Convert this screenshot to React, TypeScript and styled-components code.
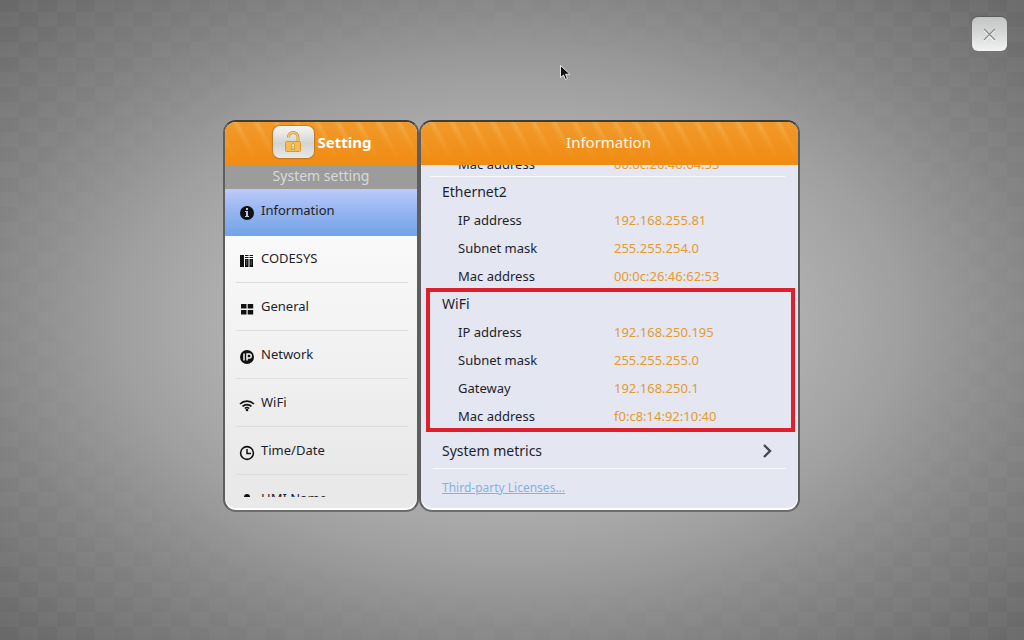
import React from "react";
import styled, { createGlobalStyle, css } from "styled-components";

const GlobalStyle = createGlobalStyle`
  * { box-sizing: border-box; }
  body {
    margin: 0;
    font-family: "Noto Sans", "Open Sans", sans-serif;
    font-size: 13px;
    color: #1d1f2b;
    background: #6f6e6f;
  }
  button { font: inherit; color: inherit; border: 0; padding: 0; background: none; }
  h1, h2, h3, dl, dt, dd, ul { margin: 0; padding: 0; font-weight: 400; }
  ul { list-style: none; }
`;

const Screen = styled.main`
  position: relative;
  min-height: 100vh;
  padding: 120px 16px 40px 15px;
  display: flex;
  justify-content: center;
  align-items: flex-start;
  background: radial-gradient(ellipse 70% 69% at 50% 50%, #c4c4c4 0%, #b4b4b4 34%, #a0a0a0 54%, #868686 75%, #6e6d6e 100%);
  &::before {
    content: "";
    position: absolute;
    inset: 0;
    background: repeating-conic-gradient(rgba(0, 0, 0, 0.04) 0 25%, transparent 0 50%) 0 12px / 38px 30px;
    mask-image: radial-gradient(ellipse 66% 70% at 50% 50%, transparent 60%, #000 110%);
  }
`;

const Panels = styled.div`
  position: relative;
  width: 100%;
  max-width: 577px;
  display: grid;
  grid-template-columns: 196fr 381fr;
`;

const Panel = styled.section<{ $tone: "list" | "detail" }>`
  display: flex;
  flex-direction: column;
  overflow: hidden;
  border: 2px solid;
  border-color: #3f3c38 #5e5e5e #6c6c6c;
  border-radius: 13px;
  background: ${(p) => (p.$tone === "list" ? "linear-gradient(#fcfcfc 20%, #e9e9e9 90%)" : "#e4e6f2")};
  box-shadow: inset 0 -2px 0 #fff;
`;

const Header = styled.header`
  flex: none;
  height: 43px;
  padding: 0 2px 4px 0;
  display: flex;
  align-items: center;
  justify-content: center;
  gap: 4px;
  color: #fff6e4;
  background:
    linear-gradient(rgba(240, 141, 20, 0) 10%, #f08d14 88%),
    repeating-linear-gradient(62deg, #f0982a 0 7px, #f3a842 12px, #f0982a 15px 18px);
`;

const Title = styled.h1<{ $bold?: boolean }>`
  font-size: 15px;
  line-height: 20px;
  ${(p) => p.$bold && css`font-weight: 700; color: #fff;`}
`;

const LockButton = styled.button`
  width: 41px;
  height: 32px;
  margin-left: 4px;
  display: grid;
  place-items: center;
  border-radius: 7px;
  background: linear-gradient(#f6f6f4, #d3d4d2 55%, #e9eae8);
  box-shadow: 0 0 1px 1px rgba(150, 100, 40, 0.55);
`;

const Subheader = styled.h2`
  flex: none;
  height: 24px;
  font-size: 14px;
  line-height: 22px;
  text-align: center;
  color: #d9d9d9;
  background: #9c9c9c;
`;

const Menu = styled.ul`
  height: 308px;
  margin-bottom: 12px;
  overflow: hidden;
`;

const MenuButton = styled.button<{ $active?: boolean }>`
  width: 100%;
  height: 48px;
  padding: 0 0 4px 14px;
  display: flex;
  align-items: center;
  gap: 6px;
  text-align: left;
  background: linear-gradient(#dedede, #dedede) 11px 46px / calc(100% - 20px) 1px no-repeat;
  svg { margin-top: 5px; flex: none; }
  ${(p) => p.$active && css`
    height: 47px;
    padding-bottom: 5px;
    background: linear-gradient(#bccbfa, #94b3f0 50%, #72a4e6);
  `}
`;

const Details = styled.div`
  flex: 1;
  overflow: hidden;
`;

const Group = styled.section<{ $marked?: boolean; $scrolled?: boolean }>`
  margin: 0 5px 0 7px;
  padding: 0 14px;
  ${(p) => p.$marked && css`outline: 4px solid #dd202c; outline-offset: -2px;`}
  ${(p) => p.$scrolled && css`
    margin-top: -15px;
    background: linear-gradient(#f8f9fd, #f8f9fd) 2px 26px / calc(100% - 10px) 1px no-repeat;
  `}
`;

const GroupTitle = styled.h3`
  font-size: 14px;
  line-height: 28px;
`;

const Row = styled.div`
  display: grid;
  grid-template-columns: 156fr 165fr;
  padding-left: 16px;
  line-height: 28px;
  dd { color: #e59b2e; }
`;

const MetricsButton = styled.button`
  width: calc(100% - 24px);
  height: 39px;
  margin: 0 12px;
  padding: 2px 13px 0 9px;
  display: flex;
  align-items: center;
  justify-content: space-between;
  font-size: 14px;
  border-bottom: 1px solid #f8f9fd;
  svg { margin-top: 2px; }
`;

const Footer = styled.p`
  margin: 0;
  padding: 9px 21px 12px;
  font-size: 12px;
  line-height: 20px;
  a { color: #82b4de; }
`;

const CloseButton = styled.button`
  position: absolute;
  top: 17px;
  right: 17px;
  width: 35px;
  height: 34px;
  display: grid;
  place-items: center;
  border-radius: 6px;
  background: linear-gradient(#c2c5c4, #d9dbda 55%, #f2f3f2);
  box-shadow: 0 -1px 1px 0 rgba(60, 60, 60, 0.4);
`;

const Pointer = styled.svg`
  position: absolute;
  left: 559px;
  top: 64px;
`;

const icons: Record<string, React.ReactNode> = {
  info: (
    <>
      <circle cx="8" cy="8" r="7" />
      <path d="M7 3h2v2H7zM6 6h3v5h1v1H6v-1h1V7H6z" fill="#b9c9ee" />
    </>
  ),
  codesys: (
    <>
      <path d="M1 2h4v12H1zM6 6h3.500v8H6zM10.500 6H14v8h-3.500zM6 2h3.500v1H6zM6 4h3.500v1H6zM10.500 2H14v1h-3.500zM10.500 4H14v1h-3.500z" />
      <path d="M7.700 7v5M12.200 7v5" stroke="#777" fill="none" strokeWidth=".7" />
    </>
  ),
  general: <path d="M2 3h5.500v4.500H2zM8.700 3h5.500v4.500H8.700zM2 9h5.500v4.500H2zM8.700 9h5.500v4.500H8.700z" />,
  network: (
    <>
      <circle cx="8" cy="8" r="7" />
      <path d="M5 4.500v7M8 11.500V5h2.200a1.900 1.900 0 0 1 0 4H8" fill="none" stroke="#f3f3f3" strokeWidth="1.500" />
    </>
  ),
  wifi: (
    <>
      <path d="M1 7a10 10 0 0 1 14 0M3.500 9.400a6.600 6.600 0 0 1 9 0M5.800 11.500a3.300 3.300 0 0 1 4.400 0" fill="none" stroke="#111" strokeWidth="1.600" />
      <circle cx="8" cy="13" r="1.300" />
    </>
  ),
  clock: (
    <>
      <circle cx="8" cy="8" r="6.400" fill="none" stroke="#111" strokeWidth="1.600" />
      <path d="M8 4v4.500h4" fill="none" stroke="#111" strokeWidth="1.500" />
    </>
  ),
  name: <circle cx="8" cy="4" r="3" />,
};

const menu = [
  ["info", "Information"],
  ["codesys", "CODESYS"],
  ["general", "General"],
  ["network", "Network"],
  ["wifi", "WiFi"],
  ["clock", "Time/Date"],
  ["name", "HMI Name"],
];

function Entries({ rows }: { rows: string[][] }) {
  return (
    <dl>
      {rows.map(([label, value]) => (
        <Row key={label}>
          <dt>{label}</dt>
          <dd>{value}</dd>
        </Row>
      ))}
    </dl>
  );
}

export default function App() {
  return (
    <Screen>
      <GlobalStyle />
      <Panels>
        <Panel $tone="list">
          <Header>
            <LockButton aria-label="Unlock">
              <svg width="18" height="24" viewBox="0 0 18 24">
                <path d="M4.500 7.500C4.500 4 6.500 2.500 9 2.500s5 2 5 5V12" fill="none" stroke="#c98f22" strokeWidth="2.800" />
                <path d="M4.500 7.500C4.500 4 6.500 2.500 9 2.500s5 2 5 5V12" fill="none" stroke="#f6d57e" strokeWidth="1.300" />
                <rect x="1.500" y="11.500" width="15" height="10" rx="1" fill="#f4bd4c" stroke="#d99a2b" />
                <path d="M9 13.500a1.600 1.600 0 0 1 1 2.800l.5 3h-3l.5-3a1.600 1.600 0 0 1 1-2.800z" fill="#e6e0cf" stroke="#b88632" strokeWidth=".7" />
              </svg>
            </LockButton>
            <Title $bold>Setting</Title>
          </Header>
          <Subheader>System setting</Subheader>
          <Menu>
            {menu.map(([icon, label], i) => (
              <li key={label}>
                <MenuButton $active={i === 0}>
                  <svg width="16" height="16" viewBox="0 0 16 16" fill="#111">{icons[icon]}</svg>
                  {label}
                </MenuButton>
              </li>
            ))}
          </Menu>
        </Panel>
        <Panel $tone="detail">
          <Header>
            <Title>Information</Title>
          </Header>
          <Details>
            <Group $scrolled>
              <Entries rows={[["Mac address", "00:0c:26:46:64:53"]]} />
            </Group>
            <Group>
              <GroupTitle>Ethernet2</GroupTitle>
              <Entries rows={[["IP address", "192.168.255.81"], ["Subnet mask", "255.255.254.0"], ["Mac address", "00:0c:26:46:62:53"]]} />
            </Group>
            <Group $marked>
              <GroupTitle>WiFi</GroupTitle>
              <Entries rows={[["IP address", "192.168.250.195"], ["Subnet mask", "255.255.255.0"], ["Gateway", "192.168.250.1"], ["Mac address", "f0:c8:14:92:10:40"]]} />
            </Group>
            <MetricsButton>
              System metrics
              <svg width="11" height="16" viewBox="0 0 11 16" fill="none" stroke="#454650" strokeWidth="2.400">
                <path d="M2 2l6 6-6 6" />
              </svg>
            </MetricsButton>
            <Footer><a href="#licenses">Third-party Licenses...</a></Footer>
          </Details>
        </Panel>
      </Panels>
      <CloseButton aria-label="Close">
        <svg width="15" height="15" viewBox="0 0 15 15" fill="none">
          <path d="M2 3l11 11M13 3L2 14" stroke="#fff" strokeWidth="1.500" />
          <path d="M2 2l11 11M13 2L2 13" stroke="#858786" strokeWidth="1.200" />
        </svg>
      </CloseButton>
      <Pointer width="12" height="17" viewBox="0 0 12 17">
        <path d="M1.500 1.500v12l3-2.500 2 4.500 2-1-2-4.200H11z" fill="#111" stroke="#e4e4e4" />
      </Pointer>
    </Screen>
  );
}
